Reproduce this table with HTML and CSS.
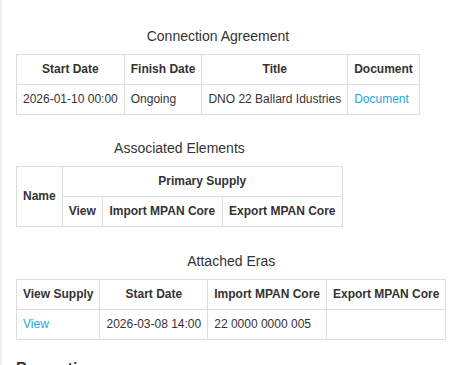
FILE: index.html
```html
<!DOCTYPE html>
<html>
<head>
<meta charset="utf-8">
<link rel="stylesheet" href="styles.css">
</head>
<body>
<div class="page">
  <table class="grid first">
    <caption>Connection Agreement</caption>
    <thead>
      <tr><th>Start Date</th><th>Finish Date</th><th>Title</th><th>Document</th></tr>
    </thead>
    <tbody>
      <tr><td>2026-01-10 00:00</td><td>Ongoing</td><td>DNO 22 Ballard Idustries</td><td><a href="#">Document</a></td></tr>
    </tbody>
  </table>

  <table class="grid">
    <caption>Associated Elements</caption>
    <thead>
      <tr><th rowspan="2">Name</th><th colspan="3">Primary Supply</th></tr>
      <tr><th>View</th><th class="mpan">Import MPAN Core</th><th class="mpan">Export MPAN Core</th></tr>
    </thead>
  </table>

  <table class="grid">
    <caption>Attached Eras</caption>
    <thead>
      <tr><th>View Supply</th><th>Start Date</th><th>Import MPAN Core</th><th>Export MPAN Core</th></tr>
    </thead>
    <tbody>
      <tr><td><a href="#">View</a></td><td>2026-03-08 14:00</td><td>22 0000 0000 005</td><td></td></tr>
    </tbody>
  </table>

  <h4 class="section">Properties</h4>
</div>
</body>
</html>
```
FILE: styles.css
```css
html, body {
  margin: 0;
  padding: 0;
  background: #ffffff;
}
body {
  font-family: "Liberation Sans", Arial, sans-serif;
  font-size: 12px;
  color: #333333;
  border-left: 2px solid #edf1f8;
  min-height: 365px;
  box-sizing: border-box;
}
.page {
  padding: 18px 0 0 14px;
}
.grid {
  border-collapse: collapse;
  margin-bottom: 16px;
}
.grid.first {
  margin-bottom: 15px;
}
.grid caption {
  font-size: 14px;
  line-height: 20px;
  padding: 8px 0;
  text-align: center;
  color: #333333;
}
.grid th,
.grid td {
  border: 1px solid #dddddd;
  padding: 6px;
  line-height: 17px;
  white-space: nowrap;
  vertical-align: middle;
}
.grid th {
  font-weight: bold;
  text-align: center;
}
.grid th.mpan {
  min-width: 107px;
}
.grid td {
  text-align: left;
}
.grid a {
  color: #1fa6df;
  text-decoration: none;
}
.section {
  margin: 20px 0 0 0;
  font-size: 16px;
  line-height: 1.1;
  font-weight: bold;
}
```
